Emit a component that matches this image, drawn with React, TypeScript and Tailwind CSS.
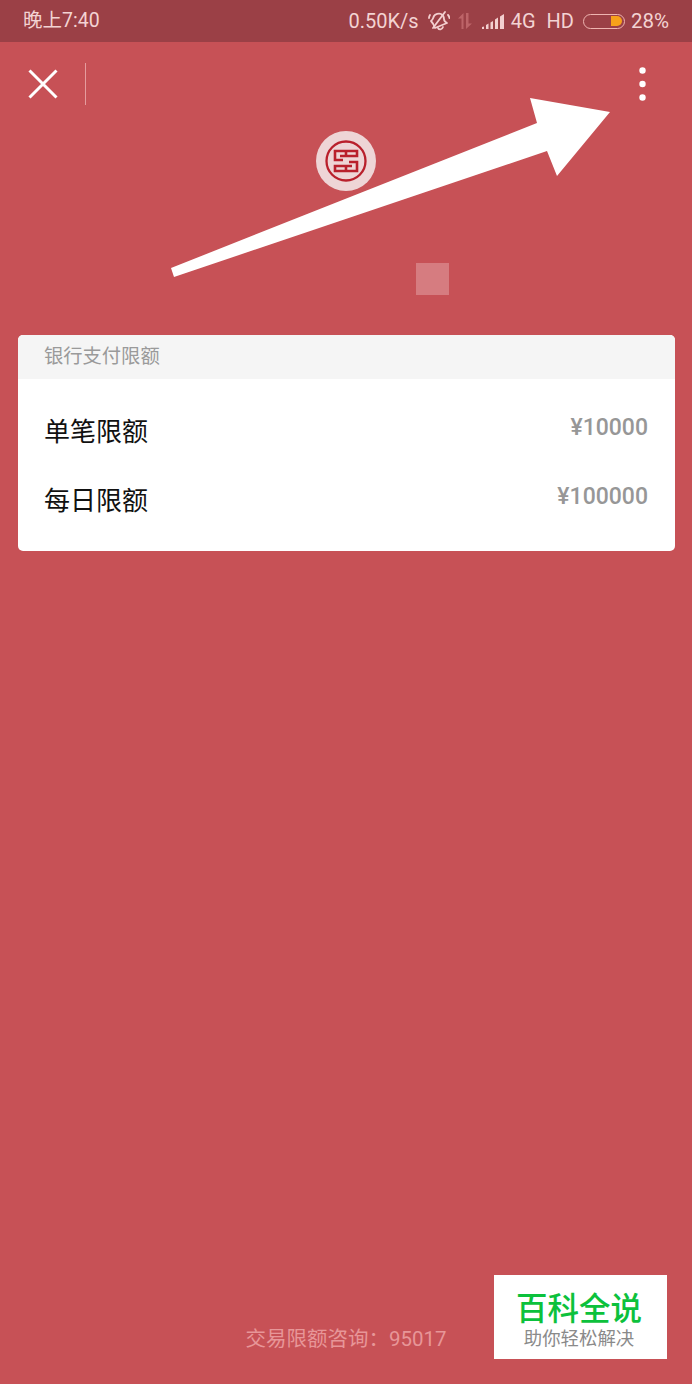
const FONT = "font-['Roboto','Noto_Sans_CJK_SC',sans-serif]";

function MuteBell() {
  return (
    <svg width="22" height="20" viewBox="0 0 22 20" fill="none" stroke="#f3cfcf" strokeWidth="1.8" strokeLinecap="round" strokeLinejoin="round">
      <path d="M3 10c2-1 2-3 3-5 1-2 5-3 7-2 2 1 3 3 3 5 0 2 1 3 3 4l-12 5c-1-3-2-5-4-7z" />
      <path d="M10 17c1 2 4 2 5-1" />
      <path d="M5 17 17 1" />
      <path d="M20 4c1 1 1.400 2 1.400 3" />
      <path d="M1 7c0-1 .4-2 1-3" />
    </svg>
  );
}

function DataArrows() {
  return (
    <svg width="16" height="18" viewBox="0 0 16 18" fill="#bd6468">
      <path d="M4.500 17V6.500H1L6.500 1V17z" />
      <path d="M9 1h2.500v10.500H15L9 17z" />
    </svg>
  );
}

function Signal() {
  return (
    <svg width="22" height="15" viewBox="0 0 22 15" fill="#f3cfcf">
      <polygon points="0,15 0,13 2,12.500 2,15" />
      <polygon points="4,15 4,11 6.500,9.500 6.500,15" />
      <polygon points="8.500,15 8.500,8.500 11,7 11,15" />
      <polygon points="13,15 13,5.500 16,3.500 16,15" />
      <polygon points="18,15 18,2.500 22,0 22,15" />
    </svg>
  );
}

function Battery() {
  return (
    <div className="flex h-[15px] w-[42px] items-center justify-end rounded-full border-[1.5px] border-[#eeb4b0] pr-[1.5px]">
      <div className="h-[10px] w-[11px] rounded-l-[1px] rounded-r-full bg-[#f7a11a]" />
    </div>
  );
}

function BankLogo() {
  return (
    <div className="flex h-[60px] w-[60px] items-center justify-center rounded-full bg-[#eed5d6]">
      <svg width="42" height="42" viewBox="0 0 42 42" fill="none" stroke="#b9202c" strokeWidth="2.600">
        <circle cx="21" cy="21" r="19.500" strokeWidth="2.300" />
        <path d="M18 20H10V11H32V16H15" />
        <path d="M24 22H32V31H10V26H27" />
        <path d="M21 11V16M21 26V31" />
      </svg>
    </div>
  );
}

function LimitRow({ label, value, last }: { label: string; value: string; last?: boolean }) {
  return (
    <div className={`flex items-start justify-between ${last ? '' : 'mb-[26px]'}`}>
      <span className="text-[26px] leading-[43px] text-[#111]">{label}</span>
      <span className="text-[23px] leading-[34px] font-medium text-[#979797]">{value}</span>
    </div>
  );
}

export default function App() {
  return (
    <div className={`relative flex h-[1384px] w-[692px] flex-col overflow-hidden bg-[#c75156] ${FONT}`}>
      <div className="flex h-[42px] items-center justify-between bg-[#9b4046] px-[23px] text-[20px] text-[#f3d3d3]">
        <span className="text-[19.500px]">晚上7:40</span>
        <div className="flex items-center">
          <span>0.50K/s</span>
          <div className="ml-[9px]"><MuteBell /></div>
          <div className="ml-[7px]"><DataArrows /></div>
          <div className="ml-[9px]"><Signal /></div>
          <span className="ml-[7px]">4G</span>
          <span className="ml-[11px]">HD</span>
          <div className="ml-[9px]"><Battery /></div>
          <span className="ml-[6px] text-[20.500px]">28%</span>
        </div>
      </div>

      <div className="flex h-[84px] items-center justify-between pr-[46px] pl-[28px]">
        <div className="flex items-center gap-[27px]">
          <svg width="30" height="30" viewBox="0 0 30 30" stroke="#ffffff" strokeWidth="3">
            <path d="M1.500 1.500 28.500 28.500M28.500 1.500 1.500 28.500" />
          </svg>
          <div className="h-[42px] w-px bg-[#e59c9e]" />
        </div>
        <svg width="7" height="34" viewBox="0 0 7 34" fill="#ffffff">
          <circle cx="3.500" cy="3.500" r="3.200" />
          <circle cx="3.500" cy="17" r="3.200" />
          <circle cx="3.500" cy="30.500" r="3.200" />
        </svg>
      </div>

      <div className="mt-[5px] flex justify-center">
        <BankLogo />
      </div>

      <div className="mt-[72px] ml-[416px] h-[32px] w-[33px] bg-[#d67c80]" />

      <div className="mt-[40px] mr-[17px] ml-[18px] overflow-hidden rounded-[5px] bg-white">
        <div className="flex h-[44px] items-center bg-[#f5f5f5] pl-[26px] text-[19.300px] text-[#9a9a9a]">银行支付限额</div>
        <div className="pt-[32px] pr-[27px] pb-[28px] pl-[26px]">
          <LimitRow label="单笔限额" value="¥10000" />
          <LimitRow label="每日限额" value="¥100000" last />
        </div>
      </div>

      <div className="mt-auto mb-[31px] flex justify-center text-[20.500px] leading-[28px] text-[#e79698]">
        交易限额咨询：95017
      </div>

      <svg className="absolute top-0 left-0" width="692" height="300" viewBox="0 0 692 300" fill="#ffffff">
        <polygon points="171,268 537,123 530,98 610,112 557,176 547,151 174,277" />
      </svg>

      <div className="absolute top-[1275px] left-[494px] flex h-[84px] w-[173px] flex-col items-center bg-white pt-[16px] pr-[3px]">
        <span className="text-[31.500px] leading-[37px] font-medium text-[#0cc13c]">百科全说</span>
        <span className="text-[18.400px] leading-[22px] text-[#8a8a8a]">助你轻松解决</span>
      </div>
    </div>
  );
}
